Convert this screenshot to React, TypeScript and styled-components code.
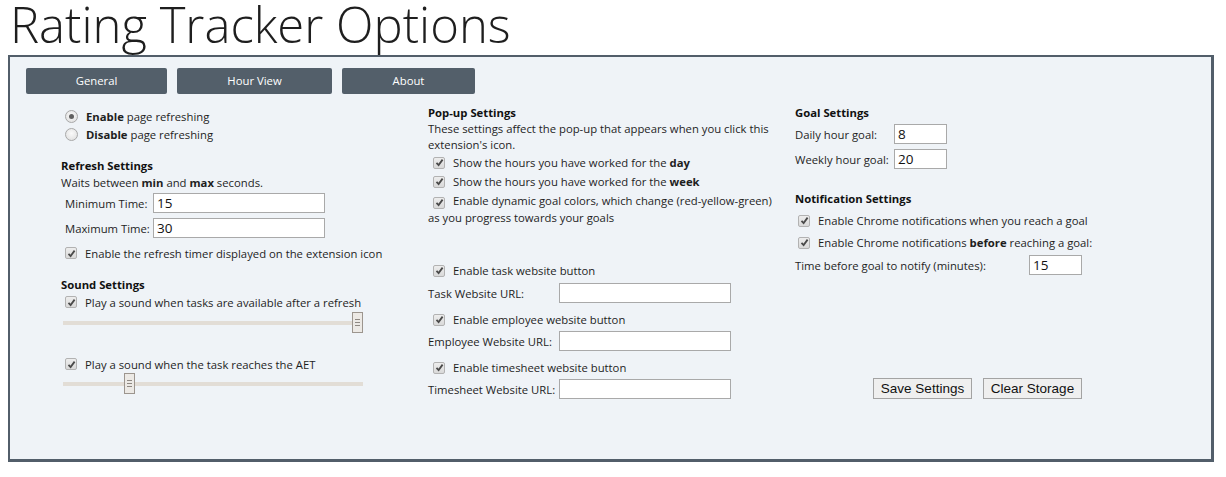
import React from "react";
import styled, {createGlobalStyle} from "styled-components";

const GlobalStyle = createGlobalStyle`
  body {
    margin: 0 8px 8px;
    background: #ffffff;
    color: #1e1e1e;
    font-family: "Open Sans", "Noto Sans", sans-serif;
    font-size: 11.3px;
  }
`;

const Title = styled.h1`
  margin: 0;
  height: 55px;
  line-height: 48px;
  font-family: "Open Sans", sans-serif;
  font-size: 49px;
  font-weight: 300;
  color: #1e1e1e;
  padding-left: 2px;
`;

const Panel = styled.div`
  box-sizing: border-box;
  width: 1206px;
  background: #eff3f7;
  border: 2px solid #525e6a;
  border-right-width: 3px;
  border-bottom-width: 3px;
  padding: 11px 16px 60px;
`;

const TabBar = styled.div`
  display: flex;
  gap: 10px;
`;

const Tab = styled.button<{ $w: number }>`
  width: ${(p) => p.$w}px;
  height: 26px;
  padding: 0 0 2px;
  border: none;
  border-radius: 2px;
  background: #535f6a;
  color: #fff;
  font-family: "Open Sans", sans-serif;
  font-size: 11.3px;
  cursor: pointer;
`;

const Columns = styled.div`
  display: grid;
  grid-template-columns: 367px 367px 1fr;
  margin-top: 10px;
  padding-left: 35px;
`;

const Column = styled.div`
  display: flex;
  flex-direction: column;
  align-items: flex-start;
`;

const SectionTitle = styled.div<{ $mt?: number; $lh?: number }>`
  margin-top: ${(p) => p.$mt ?? 0}px;
  line-height: ${(p) => p.$lh ?? 17}px;
  font-weight: 700;
  color: #111;
`;

const Line = styled.div<{ $lh?: number }>`
  line-height: ${(p) => p.$lh ?? 17}px;
  white-space: nowrap;
`;

const RadioList = styled.div`
  padding: 3px 0 0 4px;
`;

const RadioRow = styled.label`
  display: flex;
  align-items: center;
  height: 18px;
  gap: 8px;
`;

const Radio = styled.span<{ $on?: boolean }>`
  box-sizing: border-box;
  width: 13px;
  height: 13px;
  border-radius: 50%;
  border: 1px solid #a8a8a8;
  background: radial-gradient(circle at 50% 40%, #fafafa, #dcdcdc);
  display: flex;
  align-items: center;
  justify-content: center;
  &::after {
    content: "";
    display: ${(p) => (p.$on ? "block" : "none")};
    width: 5px;
    height: 5px;
    border-radius: 50%;
    background: #606060;
  }
`;

const CheckRow = styled.label<{ $mt?: number; $indent?: number; $h?: number }>`
  display: flex;
  align-items: center;
  gap: 8px;
  height: ${(p) => p.$h ?? 19}px;
  margin-top: ${(p) => p.$mt ?? 0}px;
  padding-left: ${(p) => p.$indent ?? 5}px;
  white-space: nowrap;
`;

const CheckBox = styled.span`
  box-sizing: border-box;
  flex: none;
  display: inline-flex;
  align-items: center;
  justify-content: center;
  width: 12px;
  height: 12px;
  border: 1px solid #b2b2b2;
  border-radius: 2px;
  background: linear-gradient(#ededed, #d9d9d9);
  vertical-align: -2px;
`;

const WrapCheck = styled.div`
  line-height: 17px;
  margin-top: 1px;
  white-space: nowrap;
  & > ${CheckBox} {
    margin: 0 8px 0 5px;
  }
`;

const Check = () => (
  <CheckBox>
    <svg width="9" height="9" viewBox="0 0 9 9">
      <path d="M1.5 4.8 L3.6 7 L7.6 1.6" fill="none" stroke="#4a4a4a" strokeWidth="1.8" />
    </svg>
  </CheckBox>
);

const FieldRow = styled.label<{ $label: number; $input: number; $mt?: number; $indent?: number }>`
  display: grid;
  grid-template-columns: ${(p) => p.$label}px ${(p) => p.$input}px;
  align-items: center;
  height: 20px;
  margin-top: ${(p) => p.$mt ?? 0}px;
  padding-left: ${(p) => p.$indent ?? 0}px;
  white-space: nowrap;
`;

const TextInput = styled.input`
  box-sizing: border-box;
  width: 100%;
  height: 20px;
  border: 1px solid #a9a9a9;
  background: #fff;
  padding: 0 3px;
  font-family: "Open Sans", sans-serif;
  font-size: 13.5px;
  color: #111;
  outline: none;
`;

const SliderWrap = styled.div<{ $mt?: number }>`
  position: relative;
  width: 300px;
  height: 20px;
  margin: ${(p) => p.$mt ?? 0}px 0 0 2px;
`;

const Track = styled.div`
  position: absolute;
  left: 0;
  right: 0;
  top: 9px;
  height: 4px;
  background: #e2ddd6;
`;

const Thumb = styled.div`
  position: absolute;
  top: 0;
  box-sizing: border-box;
  width: 11px;
  height: 21px;
  border: 1px solid #9c958e;
  background: #ece9e5;
  display: flex;
  flex-direction: column;
  justify-content: center;
  align-items: center;
  gap: 2px;
  & > i {
    display: block;
    width: 5px;
    height: 1px;
    background: #8e8882;
  }
`;

const Slider = ({value, mt}: { value: number; mt?: number }) => (
  <SliderWrap $mt={mt}>
    <Track />
    <Thumb style={{left: Math.round((value / 100) * 289)}}>
      <i /><i /><i />
    </Thumb>
  </SliderWrap>
);

const ButtonRow = styled.div`
  display: flex;
  justify-content: flex-end;
  gap: 11px;
  width: 287px;
  margin-top: 103px;
`;

const PlainButton = styled.button`
  width: 99px;
  height: 21px;
  padding: 0;
  border: 1px solid #a3a3a3;
  background: #efefef;
  color: #111;
  font-family: "Liberation Sans", Arial, sans-serif;
  font-size: 13.5px;
`;

const App = () => {
  return (
    <>
      <GlobalStyle />
      <Title>Rating Tracker Options</Title>
      <Panel>
        <TabBar>
          <Tab $w={141}>General</Tab>
          <Tab $w={155}>Hour View</Tab>
          <Tab $w={133}>About</Tab>
        </TabBar>

        <Columns>
          <Column>
            <RadioList>
              <RadioRow><Radio $on /><span><b>Enable</b> page refreshing</span></RadioRow>
              <RadioRow><Radio /><span><b>Disable</b> page refreshing</span></RadioRow>
            </RadioList>

            <SectionTitle $mt={14}>Refresh Settings</SectionTitle>
            <Line>Waits between <b>min</b> and <b>max</b> seconds.</Line>
            <FieldRow $label={88} $input={172} $mt={2} $indent={4}>
              <span>Minimum Time:</span> <TextInput defaultValue="15" />
            </FieldRow>
            <FieldRow $label={88} $input={172} $mt={5} $indent={4}>
              <span>Maximum Time:</span> <TextInput defaultValue="30" />
            </FieldRow>
            <CheckRow $mt={6} $h={18} $indent={4}><Check /><span>Enable the refresh timer displayed on the extension icon</span></CheckRow>

            <SectionTitle $mt={14}>Sound Settings</SectionTitle>
            <CheckRow $h={18} $indent={4}><Check /><span>Play a sound when tasks are available after a refresh</span></CheckRow>
            <Slider value={100} mt={1} />
            <CheckRow $mt={23} $h={18} $indent={4}><Check /><span>Play a sound when the task reaches the AET</span></CheckRow>
            <Slider value={21} mt={0} />
          </Column>

          <Column>
            <SectionTitle $mt={1} $lh={16}>Pop-up Settings</SectionTitle>
            <Line $lh={16}>These settings affect the pop-up that appears when you click this</Line>
            <Line $lh={16}>extension's icon.</Line>
            <CheckRow><Check /><span>Show the hours you have worked for the <b>day</b></span></CheckRow>
            <CheckRow><Check /><span>Show the hours you have worked for the <b>week</b></span></CheckRow>
            <WrapCheck>
              <Check />Enable dynamic goal colors, which change (red-yellow-green)<br />
              as you progress towards your goals
            </WrapCheck>

            <CheckRow $mt={35}><Check /><span>Enable task website button</span></CheckRow>
            <FieldRow $label={131} $input={172} $mt={3}>
              <span>Task Website URL:</span> <TextInput />
            </FieldRow>
            <CheckRow $mt={7}><Check /><span>Enable employee website button</span></CheckRow>
            <FieldRow $label={131} $input={172} $mt={2}>
              <span>Employee Website URL:</span> <TextInput />
            </FieldRow>
            <CheckRow $mt={7}><Check /><span>Enable timesheet website button</span></CheckRow>
            <FieldRow $label={131} $input={172} $mt={2}>
              <span>Timesheet Website URL:</span> <TextInput />
            </FieldRow>
          </Column>

          <Column>
            <SectionTitle $mt={1} $lh={16}>Goal Settings</SectionTitle>
            <FieldRow $label={99} $input={53} $mt={3}>
              <span>Daily hour goal:</span> <TextInput defaultValue="8" />
            </FieldRow>
            <FieldRow $label={99} $input={53} $mt={5}>
              <span>Weekly hour goal:</span> <TextInput defaultValue="20" />
            </FieldRow>

            <SectionTitle $mt={21}>Notification Settings</SectionTitle>
            <CheckRow $mt={4} $indent={3}><Check /><span>Enable Chrome notifications when you reach a goal</span></CheckRow>
            <CheckRow $mt={3} $indent={3}><Check /><span>Enable Chrome notifications <b>before</b> reaching a goal:</span></CheckRow>
            <FieldRow $label={234} $input={53} $mt={3}>
              <span>Time before goal to notify (minutes):</span> <TextInput defaultValue="15" />
            </FieldRow>

            <ButtonRow>
              <PlainButton>Save Settings</PlainButton>
              <PlainButton>Clear Storage</PlainButton>
            </ButtonRow>
          </Column>
        </Columns>
      </Panel>
    </>
  );
};

export default App;
